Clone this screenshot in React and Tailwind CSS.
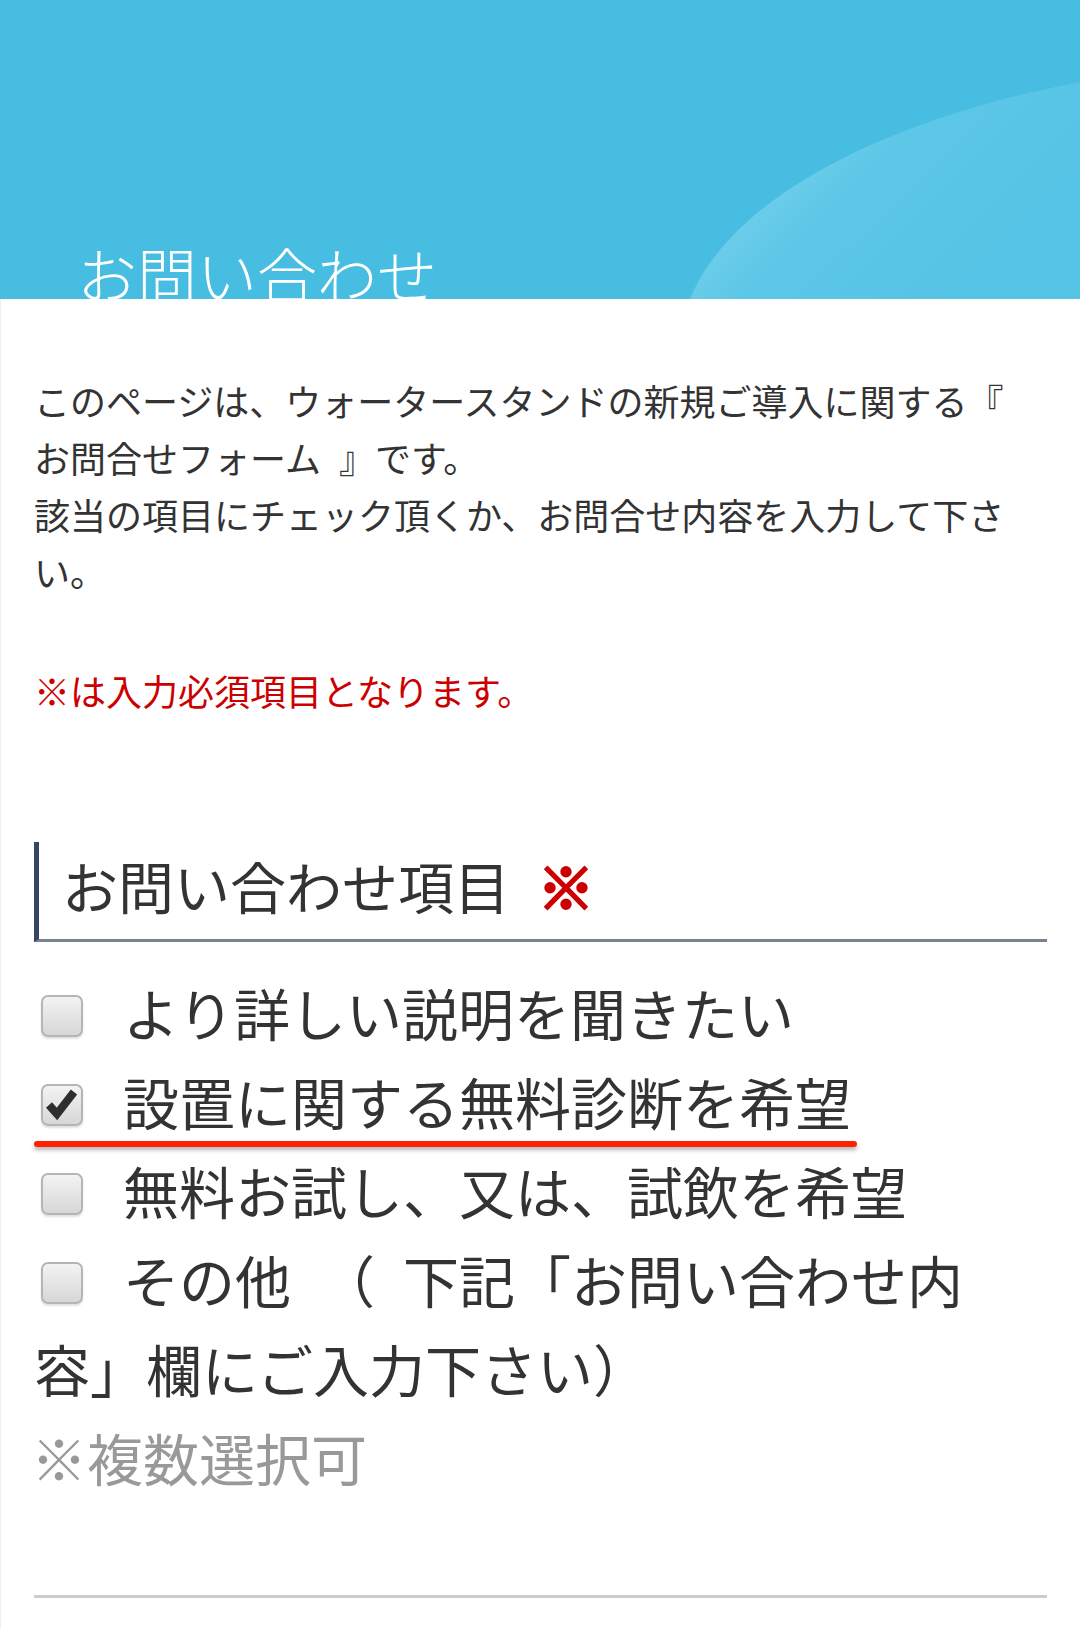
const FONT = "font-['Noto_Sans_CJK_JP','Noto_Sans',sans-serif]";

function Box({ checked }) {
  return (
    <span className="relative top-[-5px] mr-[40px] ml-[7px] inline-block h-[42px] w-[42px] rounded-[7px] border-2 border-[#b5b5b5] bg-gradient-to-b from-[#f3f3f3] to-[#d7d7d7] align-middle shadow-[0_2px_2px_rgba(0,0,0,0.12)]">
      {checked && (
        <svg viewBox="0 0 38 38" className="absolute inset-0 h-full w-full">
          <polyline points="6,19 14,28 31,6" fill="none" stroke="#2e2e2e" strokeWidth="8" strokeLinejoin="miter" />
        </svg>
      )}
    </span>
  );
}

const options = [
  { label: "より詳しい説明を聞きたい", checked: false },
  { label: "設置に関する無料診断を希望", checked: true, mark: true },
  { label: "無料お試し、又は、試飲を希望", checked: false },
  { label: "その他　（\u2002下記「お問い合わせ内容」欄にご入力下さい）", checked: false },
];

export default function App() {
  return (
    <div className={`${FONT} min-h-[1633px] bg-white text-[#333333]`}>
      <header className="relative h-[299px] overflow-hidden bg-[#46bde1]">
        <svg className="absolute inset-0 h-full w-full" viewBox="0 0 1080 299" preserveAspectRatio="none">
          <defs>
            <linearGradient id="wave" gradientUnits="userSpaceOnUse" x1="760" y1="160" x2="930" y2="330">
              <stop offset="0" stopColor="#76d0ec" />
              <stop offset="0.35" stopColor="#5dc7e7" />
              <stop offset="1" stopColor="#55c3e5" />
            </linearGradient>
          </defs>
          <path d="M690 299 C730 200 880 120 1080 82 L1080 299 Z" fill="url(#wave)" />
        </svg>
        <h1 className="relative pl-[77px] pt-[243px] text-[60px] font-light leading-none text-white">お問い合わせ</h1>
      </header>

      <main className="border-l border-[#eeeeee] px-[33px] pb-[30px] pt-[73px]">
        <div className="pr-[37px]">
          <p className="text-[36px] leading-[57px]">
            このページは、ウォータースタンドの新規ご導入に関する『<br />
            お問合せフォーム{"\u2002"}』です。<br />
            該当の項目にチェック頂くか、お問合せ内容を入力して下さい。
          </p>
          <p className="mt-[62px] text-[36px] leading-[57px] text-[#cc0000]">※は入力必須項目となります。</p>
        </div>

        <h2 className="mt-[123px] border-b-[3px] border-l-[5px] border-b-[#7b8191] border-l-[#344566] pb-[14px] pl-[23px] pt-[2px] text-[56px] font-normal leading-[81px]">
          お問い合わせ項目
          <span className="ml-[28px] font-black text-[#cc0000] [-webkit-text-stroke:3px_#cc0000]">※</span>
        </h2>

        <div className="mt-[25px] pr-[37px] text-[56px] leading-[89px]">
          {options.map((o) => (
            <div key={o.label} className="relative">
              <Box checked={o.checked} />
              {o.label}
              {o.mark && (
                <span className="absolute left-0 top-[85px] h-[6px] w-[823px] rounded-full bg-[#ff2200] shadow-[0_3px_4px_rgba(0,0,0,0.3)]" />
              )}
            </div>
          ))}
          <div className="-ml-[3px] text-[#999999]">※複数選択可</div>
        </div>

        <hr className="mt-[94px] border-0 border-t-[3px] border-[#cccccc]" />
      </main>
    </div>
  );
}
